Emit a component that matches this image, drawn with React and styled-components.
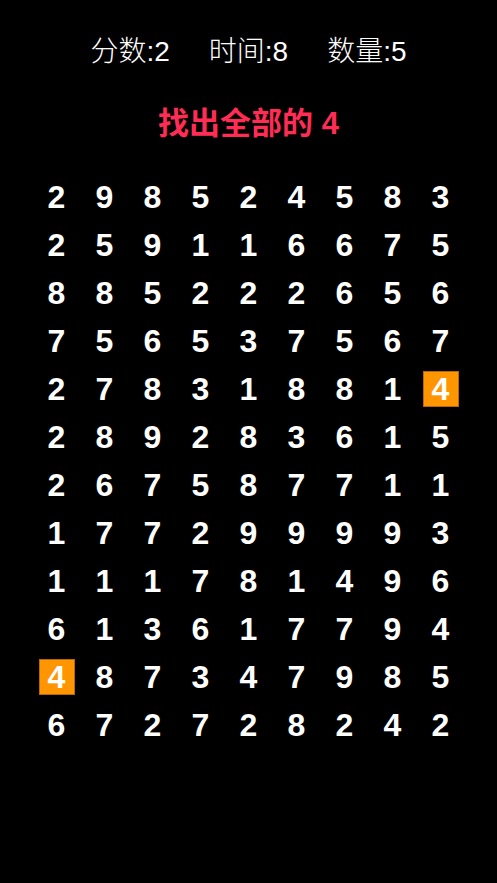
import React from 'react'
import styled, { createGlobalStyle } from 'styled-components'

const GlobalStyle = createGlobalStyle`
html, body {
  margin: 0;
  padding: 0;
  background: #000;
}
body {
  font-family: "Liberation Sans", "Noto Sans CJK SC", sans-serif;
}
`

const grid = [
  [2, 9, 8, 5, 2, 4, 5, 8, 3],
  [2, 5, 9, 1, 1, 6, 6, 7, 5],
  [8, 8, 5, 2, 2, 2, 6, 5, 6],
  [7, 5, 6, 5, 3, 7, 5, 6, 7],
  [2, 7, 8, 3, 1, 8, 8, 1, 4],
  [2, 8, 9, 2, 8, 3, 6, 1, 5],
  [2, 6, 7, 5, 8, 7, 7, 1, 1],
  [1, 7, 7, 2, 9, 9, 9, 9, 3],
  [1, 1, 1, 7, 8, 1, 4, 9, 6],
  [6, 1, 3, 6, 1, 7, 7, 9, 4],
  [4, 8, 7, 3, 4, 7, 9, 8, 5],
  [6, 7, 2, 7, 2, 8, 2, 4, 2],
]

// cells already found
const found = { '4-8': true, '10-0': true }

const App = () => {
  return (
    <Screen>
      <GlobalStyle />
      <StatusBar>
        <Stat>分数:2</Stat>
        <Stat>时间:8</Stat>
        <Stat>数量:5</Stat>
      </StatusBar>
      <Title>找出全部的 4</Title>
      <Board>
        {grid.map((row, r) =>
          row.map((n, c) => (
            <Cell key={r + '-' + c}>
              <Digit $hit={found[r + '-' + c]}>{n}</Digit>
            </Cell>
          ))
        )}
      </Board>
    </Screen>
  )
}

export default App

const Screen = styled.div`
width: 497px;
height: 883px;
background: #000;
display: flex;
flex-direction: column;
align-items: center;
overflow: hidden;
`

const StatusBar = styled.div`
display: flex;
gap: 39px;
margin-top: 34px;
height: 36px;
align-items: center;
`

const Stat = styled.div`
color: #fff;
font-size: 28px;
line-height: 36px;
font-weight: 300;
font-family: "Liberation Sans", "Noto Sans CJK SC", sans-serif;
`

const Title = styled.div`
margin-top: 39px;
color: #ff2d55;
font-size: 31px;
font-weight: bold;
font-family: "Liberation Sans", "Noto Sans CJK SC", sans-serif;
height: 30px;
line-height: 30px;
`

const Board = styled.div`
margin-top: 34px;
display: grid;
grid-template-columns: repeat(9, 48px);
grid-auto-rows: 48px;
`

const Cell = styled.div`
display: flex;
align-items: center;
justify-content: center;
`

const Digit = styled.div`
width: 36px;
height: 36px;
display: flex;
align-items: center;
justify-content: center;
box-sizing: border-box;
color: #fff;
font-size: 32px;
font-weight: bold;
font-family: "Liberation Sans", sans-serif;
background: ${p => (p.$hit ? '#ff9500' : 'transparent')};
border: 1px solid ${p => (p.$hit ? '#b86a00' : 'transparent')};
`
